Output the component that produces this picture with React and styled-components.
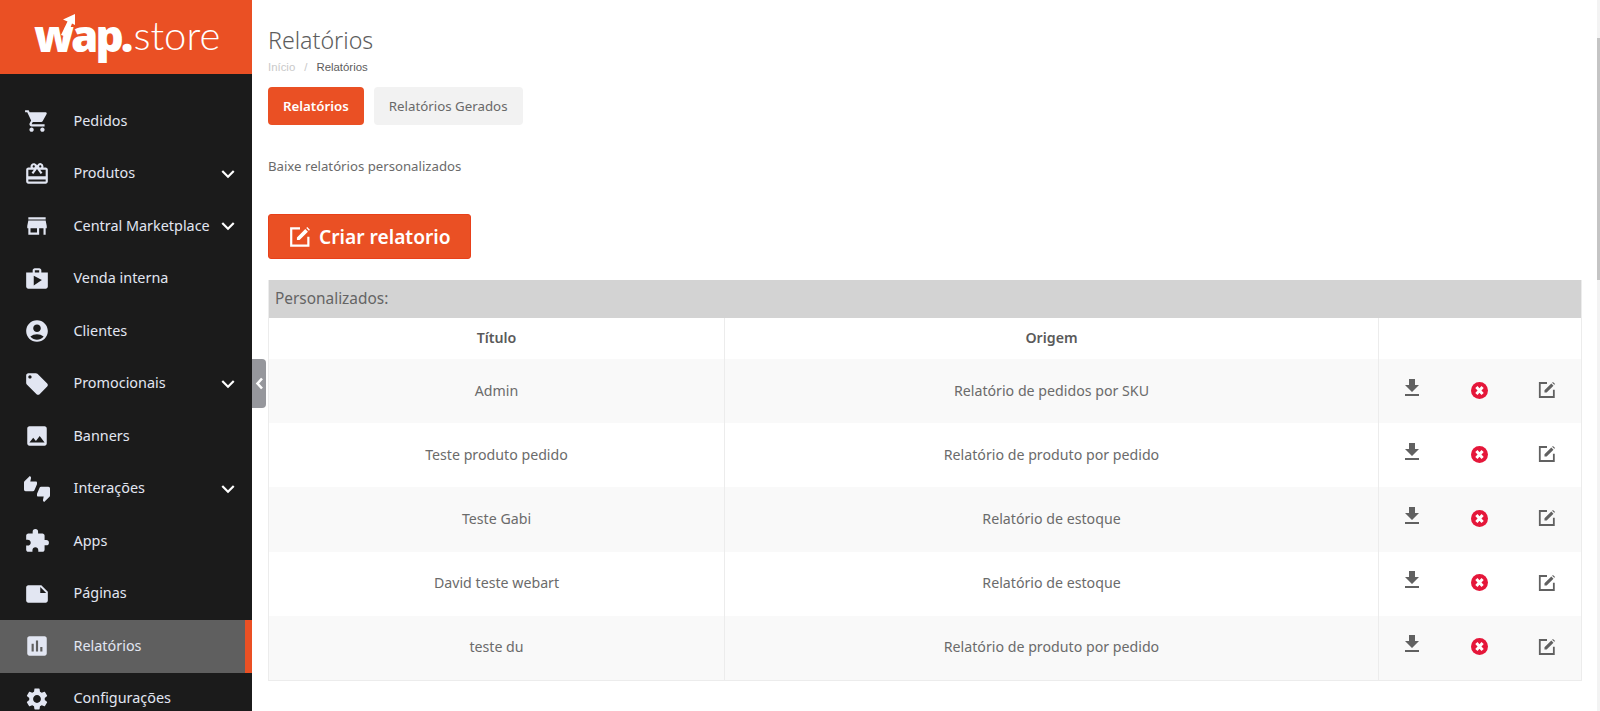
import React from 'react';
import styled, { createGlobalStyle } from 'styled-components';
import {
  MdShoppingCart, MdRedeem, MdStore, MdShop, MdAccountCircle, MdLocalOffer, MdImage,
  MdThumbsUpDown, MdExtension, MdNote, MdAssessment, MdSettings, MdExpandMore, MdFileDownload,
} from 'react-icons/md';

const UI = '"Noto Sans", "Open Sans", sans-serif';

const Global = createGlobalStyle`
  html, body { margin: 0; padding: 0; height: 711px; overflow: hidden; background: #fff; }
  * { box-sizing: border-box; }
  body { font-family: ${UI}; }
`;

const Page = styled.div`
  position: relative;
  display: flex;
  height: 711px;
  overflow: hidden;
`;

const Sidebar = styled.aside`
  position: relative;
  flex: 0 0 252px;
  height: 711px;
  background: #1b1b1b;
`;

const Brand = styled.div`
  height: 74px;
  background: #ea5024;
  display: flex;
  align-items: center;
  padding-left: 34px;
  color: #fff;
  position: relative;
`;

const BrandBold = styled.span`
  font-family: "Open Sans", sans-serif;
  font-weight: 800;
  font-size: 44px;
  letter-spacing: -3px;
  line-height: 1;
  margin-top: -4px;
`;

const BrandLight = styled.span`
  font-family: "Lato", sans-serif;
  font-weight: 300;
  font-size: 40px;
  line-height: 1;
  margin-left: 3px;
  margin-top: -5px;
`;

const BrandArrow = styled.svg`
  position: absolute;
  left: 59px;
  top: 13px;
  width: 16px;
  height: 25px;
`;

const Menu = styled.nav`
  padding-top: 21px;
`;

const Item = styled.div`
  height: 52.5px;
  display: flex;
  align-items: center;
  padding-left: 24px;
  color: #e2e6f2;
  font-size: 14.4px;
  background: ${p => (p.$active ? '#5f5f5f' : 'transparent')};
  border-right: ${p => (p.$active ? '7px solid #ea5024' : '0')};
`;

const ItemIcon = styled.span`
  width: 26px;
  height: 26px;
  font-size: 26px;
  line-height: 0;
  flex: none;
`;

const ItemLabel = styled.span`
  margin-left: 23.5px;
  margin-top: -2px;
  flex: 1;
  white-space: nowrap;
`;

const Chevron = styled.span`
  font-size: 26px;
  line-height: 0;
  color: #fff;
  margin-right: 11px;
`;

const Collapse = styled.div`
  position: absolute;
  left: 252px;
  top: 359px;
  width: 14px;
  height: 49px;
  background: #96979c;
  border-radius: 0 4px 4px 0;
  display: flex;
  align-items: center;
  justify-content: center;
  z-index: 2;
`;

const ScrollTrack = styled.div`
  position: absolute;
  right: 0;
  top: 0;
  width: 3px;
  height: 711px;
  background: #f3f3f3;
`;

const ScrollThumb = styled.div`
  margin-top: 38px;
  height: 242px;
  background: #c4c4c4;
`;

const Main = styled.main`
  flex: 1;
  min-width: 0;
  padding: 26px 19px 0 16px;
  color: #5e5e5e;
`;

const Title = styled.h1`
  margin: 0;
  font-weight: 300;
  font-size: 23.2px;
  line-height: 28px;
  color: #5d5d5d;
`;

const Crumbs = styled.div`
  margin-top: 7px;
  font-family: "Liberation Sans", sans-serif;
  font-size: 11.4px;
  line-height: 13px;
  color: #c9c9c9;
  display: flex;
  gap: 9px;
`;

const CrumbCurrent = styled.span`
  color: #5c5c5c;
`;

const Tabs = styled.div`
  margin-top: 13px;
  display: flex;
  gap: 10px;
`;

const Tab = styled.div`
  height: 38px;
  padding: 0 15px;
  border-radius: 4px;
  font-size: 13.3px;
  display: flex;
  align-items: center;
  background: ${p => (p.$active ? '#ea5024' : '#f2f2f2')};
  color: ${p => (p.$active ? '#fff' : '#696969')};
  font-weight: ${p => (p.$active ? 600 : 400)};
`;

const Lead = styled.p`
  margin: 31px 0 0;
  font-size: 13.2px;
  line-height: 20px;
  color: #6a6a6a;
`;

const CreateButton = styled.button`
  margin-top: 38px;
  height: 45px;
  width: 203px;
  display: flex;
  align-items: center;
  padding: 0 20px;
  gap: 8px;
  background: #ea5024;
  border: 1px solid #e8401a;
  border-radius: 3px;
  color: #fff;
  font-family: ${UI};
  font-size: 19.2px;
  font-weight: 600;
  white-space: nowrap;

  svg { flex: none; }
`;

const TableBox = styled.section`
  margin-top: 21px;
  border: 1px solid #ececec;
  border-top: 0;
  width: 1314px;
`;

const TableCaption = styled.div`
  height: 38px;
  background: #d3d3d3;
  padding: 0 0 2px 6px;
  display: flex;
  align-items: center;
  font-size: 15.4px;
  color: #646464;
`;

const Row = styled.div`
  display: grid;
  grid-template-columns: 456px 654px 1fr;
  height: ${p => (p.$head ? '41px' : '64.2px')};
  background: ${p => (p.$shade ? '#f9f9f9' : '#fff')};
`;

const Cell = styled.div`
  display: flex;
  align-items: center;
  justify-content: center;
  padding-bottom: 2px;
  font-size: 14.2px;
  font-weight: ${p => (p.$head ? 600 : 400)};
  color: ${p => (p.$head ? '#5a5a5a' : '#6b6b6b')};
  border-right: 1px solid #ececec;
`;

const Actions = styled.div`
  display: grid;
  grid-template-columns: 66px 68px 68px;
  align-items: center;
  justify-items: center;
  color: #616161;
`;

const ActionIcon = styled.span`
  line-height: 0;
  font-size: 24px;
  margin-top: ${p => (p.$up ? '-7px' : '-2px')};
`;

const EditSvg = ({ size = 20, color = 'currentColor' }) => (
  <svg width={size} height={size} viewBox="0 0 20 20" fill="none">
    <path d="M10 2.2H2v15.6h15.6V9.8" stroke={color} strokeWidth="2" />
    <path d="M7.2 12.8v-2.4l7.6-7.6 2.4 2.4-7.6 7.6z M15.7 1.9l.9-.9 2.4 2.4-.9.9z" fill={color} />
  </svg>
);

const RemoveSvg = () => (
  <svg width="17" height="17" viewBox="0 0 17 17">
    <circle cx="8.5" cy="8.5" r="8.5" fill="#e5173a" />
    <path d="M5.4 5l6.2 7M11.6 5l-6.2 7" stroke="#fff" strokeWidth="3" />
  </svg>
);

const items = [
  ['Pedidos', MdShoppingCart],
  ['Produtos', MdRedeem, true],
  ['Central Marketplace', MdStore, true],
  ['Venda interna', MdShop],
  ['Clientes', MdAccountCircle],
  ['Promocionais', MdLocalOffer, true],
  ['Banners', MdImage],
  ['Interações', MdThumbsUpDown, true],
  ['Apps', MdExtension],
  ['Páginas', MdNote],
  ['Relatórios', MdAssessment, false, true],
  ['Configurações', MdSettings],
];

const rows = [
  ['Admin', 'Relatório de pedidos por SKU'],
  ['Teste produto pedido', 'Relatório de produto por pedido'],
  ['Teste Gabi', 'Relatório de estoque'],
  ['David teste webart', 'Relatório de estoque'],
  ['teste du', 'Relatório de produto por pedido'],
];

export default function App() {
  return (
    <Page>
      <Global />
      <Sidebar>
        <Brand>
          <BrandBold>wap.</BrandBold>
          <BrandLight>store</BrandLight>
          <BrandArrow viewBox="0 0 16 25">
            <path d="M16 1 L4 6.5 L8.5 8.5 L2 22 L8 24 L13 10.5 L16 12z" fill="#fff" />
          </BrandArrow>
        </Brand>
        <Menu>
          {items.map(([label, Icon, expand, active]) => (
            <Item key={label} $active={active}>
              <ItemIcon><Icon /></ItemIcon>
              <ItemLabel>{label}</ItemLabel>
              {expand && <Chevron><MdExpandMore /></Chevron>}
            </Item>
          ))}
        </Menu>
        <Collapse>
          <svg width="9" height="13" viewBox="0 0 9 13">
            <path d="M7 1.5L2.5 6.5 7 11.5" fill="none" stroke="#fff" strokeWidth="2.6" />
          </svg>
        </Collapse>
      </Sidebar>
      <Main>
        <Title>Relatórios</Title>
        <Crumbs>
          <span>Início</span>
          <span>/</span>
          <CrumbCurrent>Relatórios</CrumbCurrent>
        </Crumbs>
        <Tabs>
          <Tab $active>Relatórios</Tab>
          <Tab>Relatórios Gerados</Tab>
        </Tabs>
        <Lead>Baixe relatórios personalizados</Lead>
        <CreateButton>
          <EditSvg size={22} color="#fff" />
          Criar relatorio
        </CreateButton>
        <TableBox>
          <TableCaption>Personalizados:</TableCaption>
          <Row $head>
            <Cell $head>Título</Cell>
            <Cell $head>Origem</Cell>
            <div />
          </Row>
          {rows.map(([title, origin], i) => (
            <Row key={title} $shade={i % 2 === 0}>
              <Cell>{title}</Cell>
              <Cell>{origin}</Cell>
              <Actions>
                <ActionIcon $up><MdFileDownload /></ActionIcon>
                <ActionIcon><RemoveSvg /></ActionIcon>
                <ActionIcon><EditSvg size={18} /></ActionIcon>
              </Actions>
            </Row>
          ))}
        </TableBox>
      </Main>
      <ScrollTrack><ScrollThumb /></ScrollTrack>
    </Page>
  );
}
